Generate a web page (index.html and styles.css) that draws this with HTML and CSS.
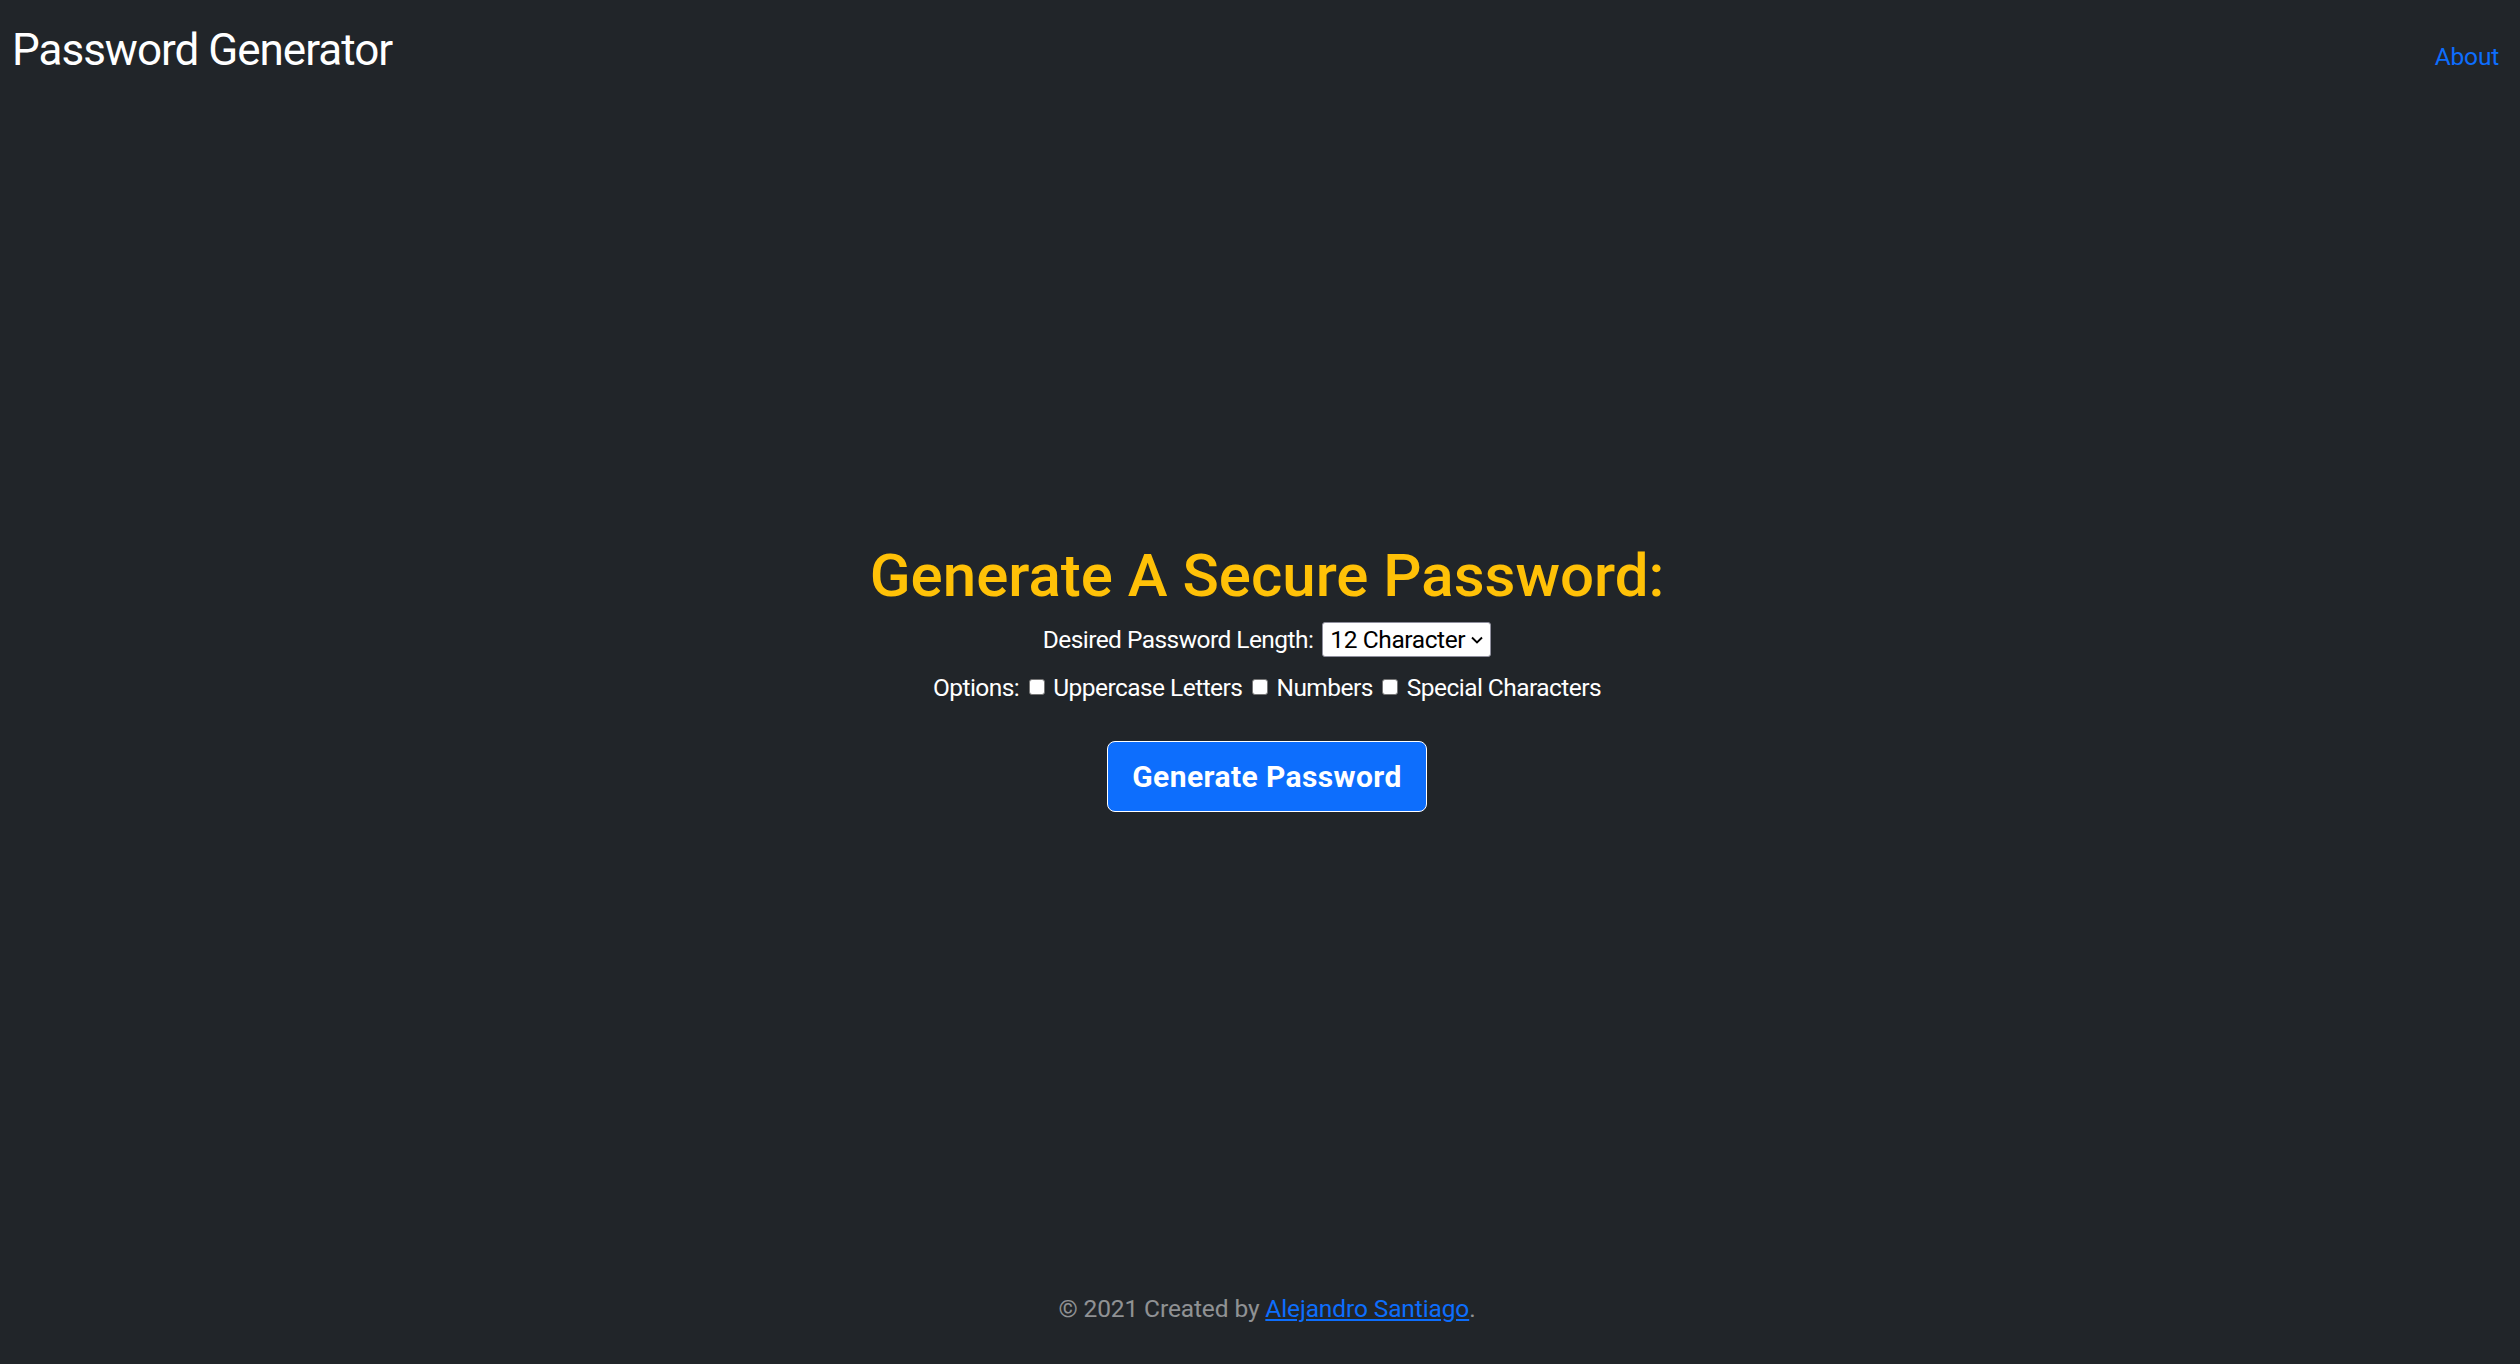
FILE: index.html
```html
<!DOCTYPE html>
<html lang="en">
<head>
<meta charset="utf-8">
<title>Password Generator</title>
<link rel="stylesheet" href="styles.css">
</head>
<body>
<div class="cover">
  <header class="topbar">
    <h3 class="brand">Password Generator</h3>
    <nav class="nav"><a class="nav-link" href="#">About</a></nav>
  </header>
  <main class="main">
    <h1 class="title">Generate A Secure Password:</h1>
    <div class="row row-length">
      <label for="len">Desired Password Length:</label>
      <select id="len" class="select">
        <option>12 Character</option>
        <option>16 Character</option>
        <option>24 Character</option>
      </select>
    </div>
    <div class="row row-options">
      Options: <input type="checkbox" class="check"> Uppercase Letters <input type="checkbox" class="check"> Numbers <input type="checkbox" class="check"> Special Characters
    </div>
    <button class="btn">Generate Password</button>
  </main>
  <footer class="footer">
    <p>© 2021 Created by <a href="#">Alejandro Santiago</a>.</p>
  </footer>
</div>
</body>
</html>
```

FILE: styles.css
```css
html, body {
  height: 100%;
}
body {
  margin: 0;
  background: #212529;
  color: #fff;
  font-family: Roboto, "Open Sans", sans-serif;
  font-size: 24.5px;
  line-height: 1.5;
}
.cover {
  display: flex;
  flex-direction: column;
  height: 100%;
}
.topbar {
  display: flex;
  justify-content: space-between;
  align-items: baseline;
  padding: 23px 21px 16px 12px;
}
.brand {
  margin: 0;
  font-size: 44px;
  font-weight: 400;
  line-height: 54px;
  letter-spacing: -1px;
}
.nav-link {
  color: #0d6efd;
  text-decoration: none;
  letter-spacing: -0.2px;
}
.main {
  flex: 1;
  display: flex;
  flex-direction: column;
  align-items: center;
  justify-content: center;
  padding: 0 0 1.5px 14px;
}
.title {
  margin: 0;
  color: #ffc107;
  font-size: 60px;
  font-weight: 500;
  line-height: 72px;
}
.row {
  height: 38px;
  line-height: 38px;
  white-space: nowrap;
  letter-spacing: -0.55px;
}
.row-length {
  display: flex;
  align-items: center;
  margin-top: 9px;
}
.row-options {
  margin-top: 10.5px;
}
.select {
  appearance: none;
  -webkit-appearance: none;
  margin-left: 9px;
  width: 169px;
  height: 35px;
  padding: 0 0 0 7px;
  border: 1px solid #8f8f9d;
  border-radius: 3px;
  background: #fff url("data:image/svg+xml,%3Csvg xmlns='http://www.w3.org/2000/svg' width='14' height='10' viewBox='0 0 14 10'%3E%3Cpath d='M2 2.5l5 5 5-5' fill='none' stroke='%23000' stroke-width='1.9'/%3E%3C/svg%3E") no-repeat right 6px center;
  color: #000;
  font-family: inherit;
  font-size: 24.5px;
  letter-spacing: -0.4px;
  line-height: 33px;
}
.check {
  appearance: none;
  -webkit-appearance: none;
  box-sizing: border-box;
  width: 16px;
  height: 16px;
  margin: 3px 3px 1.5px 4px;
  vertical-align: baseline;
  background: #fff;
  border: 1px solid #767676;
  border-radius: 3px;
}
.btn {
  margin-top: 34px;
  height: 71px;
  padding: 0 24px;
  background: #0d6efd;
  border: 1px solid #fff;
  border-radius: 8px;
  color: #fff;
  font-family: inherit;
  font-size: 30px;
  font-weight: 700;
  letter-spacing: 0.4px;
  cursor: pointer;
}
.footer {
  height: 104px;
  box-sizing: border-box;
  padding: 30px 0 0 14px;
  text-align: center;
  color: rgba(255, 255, 255, 0.5);
  letter-spacing: -0.12px;
}
.footer p {
  margin: 0;
  line-height: 38px;
}
.footer a {
  color: #0d6efd;
}
```
